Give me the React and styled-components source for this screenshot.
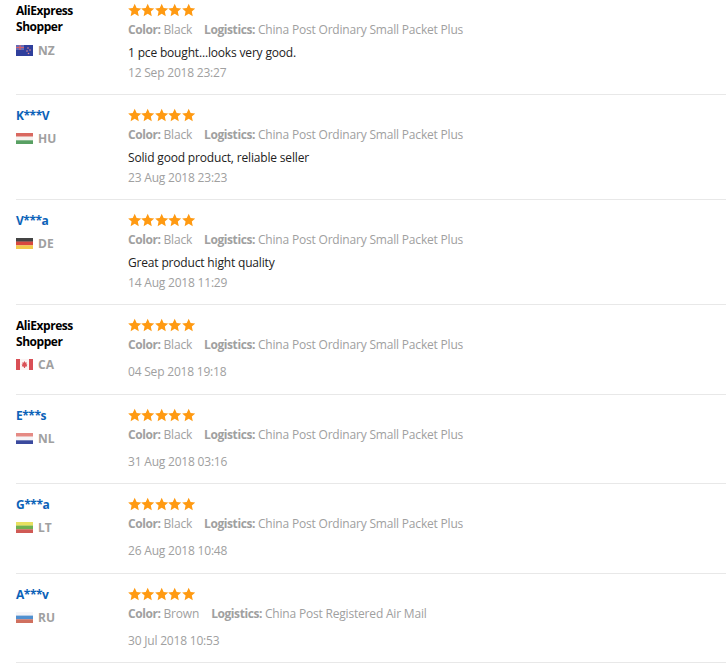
import React from 'react'
import styled, { createGlobalStyle } from 'styled-components'

const GlobalStyle = createGlobalStyle`
  html, body { margin: 0; padding: 0; background: #fff; }
  body { font-family: "Open Sans", "Liberation Sans", sans-serif; font-size: 12px; overflow: hidden; }
`

const List = styled.div`
  width: 726px;
  height: 663px;
  overflow: hidden;
`

const Row = styled.div`
  display: flex;
  box-sizing: border-box;
  height: ${p => p.$height}px;
  margin-left: 16px;
  padding-top: ${p => p.$top}px;
  border-bottom: 1px solid #e8e8e8;
`

const UserCol = styled.div`
  width: 112px;
  flex-shrink: 0;
`

const Name = styled.div`
  width: 80px;
  font-size: 12px;
  line-height: 16px;
  font-weight: 700;
  letter-spacing: -0.45px;
  color: ${p => (p.$link ? '#0b62b8' : '#000')};
`

const Country = styled.div`
  display: flex;
  align-items: center;
  gap: 5px;
  margin-top: ${p => p.$gap}px;
  height: 16px;
  font-size: 12px;
  font-weight: 700;
  color: #a0a0a0;
`

const FlagBox = styled.svg`
  width: 17px;
  height: 11px;
  display: block;
  filter: blur(0.35px);
`

const Stars = styled.div`
  display: flex;
  height: 14px;
`

const Meta = styled.div`
  display: flex;
  gap: 12px;
  margin-top: 4px;
  line-height: 17px;
  letter-spacing: -0.19px;
  color: #a0a0a0;
`

const Label = styled.b`
  font-weight: 700;
  letter-spacing: -0.42px;
  margin-right: 3px;
`

const Review = styled.div`
  margin-top: 6px;
  line-height: 17px;
  letter-spacing: -0.17px;
  color: #222;
`

const Time = styled.div`
  margin-top: ${p => p.$gap}px;
  line-height: 17px;
  letter-spacing: -0.2px;
  color: #a0a0a0;
`

const Star = () => (
  <svg width="13.4" height="14" viewBox="0 0 24 24">
    <path fill="#ff9a12" d="M12 .8l3.5 7.6 8.2.9-6.1 5.6 1.7 8.2L12 18.9l-7.3 4.2 1.7-8.2L.3 9.3l8.2-.9z" />
  </svg>
)

const Flag = ({ code }) => {
  const bands = {
    HU: ['#d9685f', '#f6f1ee', '#58a063'],
    DE: ['#444', '#d8483e', '#f2c94a'],
    NL: ['#e58a84', '#f6f4f6', '#3b4a9e'],
    LT: ['#e8e060', '#70b050', '#d05a55'],
    RU: ['#f4f4f8', '#5090d0', '#d0705f'],
  }[code]

  if (code === 'NZ') {
    return (
      <FlagBox viewBox="0 0 17 11">
        <rect width="17" height="11" fill="#2f3f9c" />
        <rect width="8" height="5" fill="#6a6cb4" />
        <path d="M0 2.5h8M4 0v5" stroke="#d8606a" strokeWidth="1.2" />
        <circle cx="12" cy="3" r=".8" fill="#e98a90" />
        <circle cx="14" cy="5" r=".8" fill="#e98a90" />
        <circle cx="11" cy="6" r=".8" fill="#e98a90" />
        <circle cx="12.5" cy="8.5" r=".8" fill="#e98a90" />
      </FlagBox>
    )
  }
  if (code === 'CA') {
    return (
      <FlagBox viewBox="0 0 17 11">
        <rect width="17" height="11" fill="#fbf3f3" />
        <rect width="4" height="11" fill="#d94f55" />
        <rect x="13" width="4" height="11" fill="#d94f55" />
        <path d="M8.5 2l1 1.7 1.2-.4-.4 2.2 1-.2-.5 1.5.5.4-2.2.6v1.2h-1.200V7.800l-2.200-.6.500-.4-.5-1.500 1 .2-.4-2.200 1.200.4z" fill="#d94f55" />
      </FlagBox>
    )
  }
  return (
    <FlagBox viewBox="0 0 17 11">
      <rect width="17" height="3.8" fill={bands[0]} />
      <rect y="3.6" width="17" height="3.8" fill={bands[1]} />
      <rect y="7.300" width="17" height="3.700" fill={bands[2]} />
    </FlagBox>
  )
}

const reviews = [
  { name: 'AliExpress Shopper', code: 'NZ', color: 'Black', ship: 'China Post Ordinary Small Packet Plus', text: '1 pce bought...looks very good.', date: '12 Sep 2018 23:27', height: 95, top: 3 },
  { name: 'K***V', link: true, code: 'HU', color: 'Black', ship: 'China Post Ordinary Small Packet Plus', text: 'Solid good product, reliable seller', date: '23 Aug 2018 23:23', height: 105, top: 13 },
  { name: 'V***a', link: true, code: 'DE', color: 'Black', ship: 'China Post Ordinary Small Packet Plus', text: 'Great product hight quality', date: '14 Aug 2018 11:29', height: 105, top: 13 },
  { name: 'AliExpress Shopper', code: 'CA', color: 'Black', ship: 'China Post Ordinary Small Packet Plus', date: '04 Sep 2018 19:18', height: 90, top: 13 },
  { name: 'E***s', link: true, code: 'NL', color: 'Black', ship: 'China Post Ordinary Small Packet Plus', date: '31 Aug 2018 03:16', height: 89, top: 13 },
  { name: 'G***a', link: true, code: 'LT', color: 'Black', ship: 'China Post Ordinary Small Packet Plus', date: '26 Aug 2018 10:48', height: 90, top: 13 },
  { name: 'A***v', link: true, code: 'RU', color: 'Brown', ship: 'China Post Registered Air Mail', date: '30 Jul 2018 10:53', height: 89, top: 13 },
]

export default function App() {
  return (
    <List>
      <GlobalStyle />
      {reviews.map((r, i) => (
        <Row key={i} $height={r.height} $top={r.top}>
          <UserCol>
            <Name $link={r.link}>{r.name}</Name>
            <Country $gap={i === 0 ? 7 : 6}>
              <Flag code={r.code} />
              {r.code}
            </Country>
          </UserCol>
          <div>
            <Stars>
              {[0, 1, 2, 3, 4].map(s => <Star key={s} />)}
            </Stars>
            <Meta>
              <span><Label>Color:</Label>{r.color}</span>
              <span><Label>Logistics:</Label>{r.ship}</span>
            </Meta>
            {r.text && <Review>{r.text}</Review>}
            <Time $gap={r.text ? 3 : 10}>{r.date}</Time>
          </div>
        </Row>
      ))}
    </List>
  )
}
